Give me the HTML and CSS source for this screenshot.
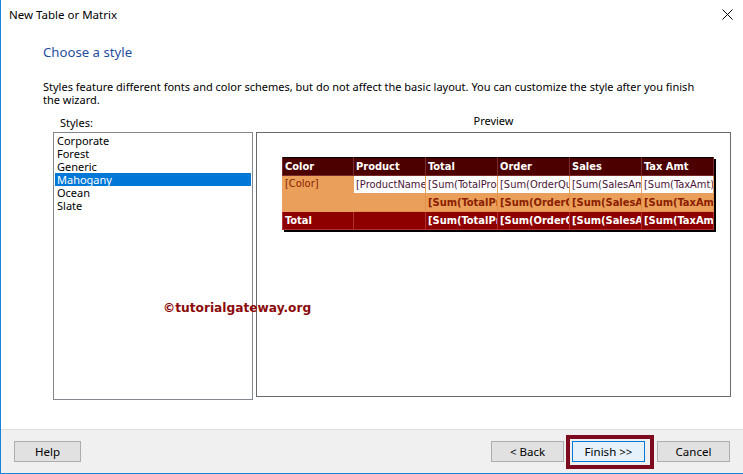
FILE: index.html
```html
<!DOCTYPE html>
<html>
<head>
<meta charset="utf-8">
<link rel="stylesheet" href="styles.css">
</head>
<body>
<div class="window">
  <div class="titlebar">
    <span class="title">New Table or Matrix</span>
    <svg class="close" width="11" height="11" viewBox="0 0 11 11"><path d="M0.5 0.5 L10.5 10.5 M10.5 0.5 L0.5 10.5" stroke="#000" stroke-width="1" fill="none"/></svg>
  </div>
  <div class="content">
    <h1 class="heading">Choose a style</h1>
    <p class="desc">Styles feature different fonts and color schemes, but do not affect the basic layout. You can customize the style after you finish the wizard.</p>
    <div class="panes">
      <div class="pane-list">
        <div class="label">Styles:</div>
        <ul class="listbox">
          <li>Corporate</li>
          <li>Forest</li>
          <li>Generic</li>
          <li class="selected">Mahogany</li>
          <li>Ocean</li>
          <li>Slate</li>
        </ul>
      </div>
      <div class="pane-preview">
        <div class="label center">Preview</div>
        <div class="preview">
          <table class="matrix">
            <colgroup><col class="c1"><col class="c2"><col class="c2"><col class="c2"><col class="c2"><col class="c2"></colgroup>
            <tr class="hdr"><td>Color</td><td>Product</td><td>Total</td><td>Order</td><td>Sales</td><td>Tax Amt</td></tr>
            <tr class="detail"><td class="grp" rowspan="2">[Color]</td><td>[ProductName]</td><td>[Sum(TotalProductCost)]</td><td>[Sum(OrderQuantity)]</td><td>[Sum(SalesAmount)]</td><td>[Sum(TaxAmt)]</td></tr>
            <tr class="sub"><td></td><td>[Sum(TotalProductCost)]</td><td>[Sum(OrderQuantity)]</td><td>[Sum(SalesAmount)]</td><td>[Sum(TaxAmt)]</td></tr>
            <tr class="total"><td>Total</td><td></td><td>[Sum(TotalProductCost)]</td><td>[Sum(OrderQuantity)]</td><td>[Sum(SalesAmount)]</td><td>[Sum(TaxAmt)]</td></tr>
          </table>
        </div>
      </div>
      <div class="watermark">©tutorialgateway.org</div>
    </div>
  </div>
  <div class="footer">
    <button class="btn help">Help</button>
    <span class="spacer"></span>
    <button class="btn">&lt; Back</button>
    <span class="highlight"><button class="btn primary">Finish &gt;&gt;</button></span>
    <button class="btn cancel">Cancel</button>
  </div>
</div>
</body>
</html>
```
FILE: styles.css
```css
html, body {
  margin: 0;
  padding: 0;
  background: #fff;
}
body {
  font-family: "Noto Sans", "Open Sans", sans-serif;
  font-size: 11px;
  color: #000;
}
.window {
  width: 743px;
  height: 474px;
  box-sizing: border-box;
  border-left: 1px solid #1883d7;
  border-bottom: 1px solid #1883d7;
  display: flex;
  flex-direction: column;
  background: #fff;
}
.titlebar {
  height: 27px;
  display: flex;
  align-items: center;
  padding: 0 10px 0 8px;
}
.title {
  flex: 1;
  font-size: 11.5px;
  margin-top: 1px;
}
.close {
  display: block;
  margin-top: 2px;
}
.content {
  flex: 1;
  padding-left: 42px;
  position: relative;
}
.heading {
  margin: 15px 0 0 0;
  font-size: 13.2px;
  font-weight: normal;
  line-height: 20px;
  color: #1f4e9e;
}
.desc {
  margin: 18px 0 0 0;
  width: 662px;
  line-height: 13px;
  font-size: 11px;
}
.panes {
  display: flex;
  gap: 3px;
  margin-top: 10px;
  margin-left: 10px;
}
.label {
  line-height: 13px;
  height: 13px;
  margin-bottom: 3px;
  padding-left: 7px;
}
.label.center {
  text-align: center;
  padding-left: 0;
  margin-top: -2px;
  margin-bottom: 5px;
}
.listbox {
  list-style: none;
  margin: 0;
  padding: 1px 1px 0 1px;
  width: 196px;
  height: 265px;
  border: 1px solid #828790;
  box-sizing: content-box;
}
.listbox li {
  height: 13px;
  line-height: 14px;
  padding-left: 2px;
}
.listbox li.selected {
  background: #0078d7;
  color: #fff;
}
.preview {
  width: 475px;
  height: 265px;
  border: 1px solid #6b6b6b;
  padding: 24px 0 0 25px;
  box-sizing: border-box;
}
.matrix {
  border-collapse: collapse;
  table-layout: fixed;
  width: 432px;
  border: 1px solid #000;
  box-shadow: 2px 2px 0 #000;
  font-family: "DejaVu Sans Condensed", "DejaVu Sans", sans-serif;
  font-size: 11px;
}
.matrix col.c1 { width: 71px; }
.matrix col.c2 { width: 72px; }
.matrix td {
  height: 17px;
  padding: 0 0 0 2px;
  white-space: nowrap;
  overflow: hidden;
  text-overflow: clip;
  border: 1px solid #e0904a;
  line-height: 15px;
}
.hdr td {
  background: #4c0000;
  color: #fff;
  font-weight: bold;
  border-color: #7a2a2a;
  border-top: none;
}
.detail td {
  background: #fff;
  color: #4a1436;
  border-color: #e8a060;
}
.detail td.grp {
  background: #ea9f5a;
  color: #8b2000;
  vertical-align: top;
}
.sub td {
  background: #ea9f5a;
  color: #8b2000;
  font-weight: bold;
  border-color: #e0904a;
}
.total td {
  background: #8e0000;
  color: #fff;
  font-weight: bold;
  border-color: #b03030;
}
.watermark {
  position: absolute;
  left: 162px;
  top: 274px;
  font-family: "DejaVu Sans", sans-serif;
  font-weight: bold;
  font-size: 12.2px;
  color: #8b0a0a;
}
.footer {
  height: 43px;
  border-top: 1px solid #dfdfdf;
  background: #f0f0f0;
  display: flex;
  align-items: center;
  padding: 0 13px 0 13px;
}
.spacer { flex: 1; }
.btn {
  font-family: "Noto Sans", "Open Sans", sans-serif;
  font-size: 11.5px;
  height: 21px;
  width: 73px;
  padding: 0;
  background: #e1e1e1;
  border: 1px solid #adadad;
  color: #000;
  box-sizing: border-box;
}
.btn.help { width: 67px; }
.highlight {
  display: inline-flex;
  border: 4px solid #7d0a1f;
  padding: 2px 5px 3px 2px;
  margin: 0 3px 0 2px;
}
.btn.primary {
  border-color: #0078d7;
  background: #e5f1fb;
}
```
